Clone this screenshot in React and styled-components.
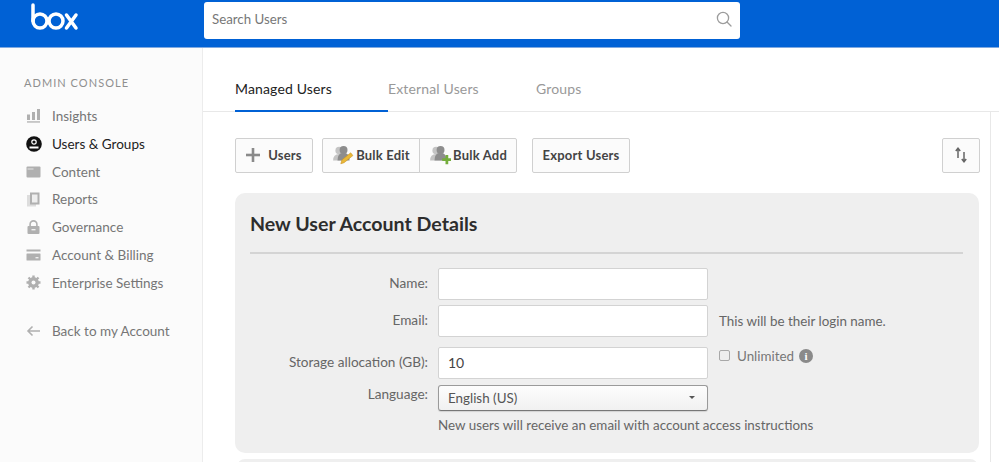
import React from "react";
import styled, {createGlobalStyle} from "styled-components";

const GlobalStyle = createGlobalStyle`
html, body {
  margin: 0;
  padding: 0;
  background: #fff;
  overflow: hidden;
}
* {
  box-sizing: border-box;
}
body {
  font-family: Lato, "Liberation Sans", sans-serif;
}
`;

const Page = styled.div`
width: 999px;
height: 462px;
overflow: hidden;
display: flex;
flex-direction: column;
`;

const TopBar = styled.header`
flex: 0 0 48px;
display: flex;
align-items: flex-start;
background: #0061d5;
border-bottom: 1px solid #7fa9e0;
`;

const LogoBox = styled.div`
width: 204px;
padding: 3px 0 0 30px;
`;

const SearchBox = styled.div`
width: 536px;
height: 37px;
margin-top: 2px;
padding: 0 8px 3px 8px;
display: flex;
align-items: center;
justify-content: space-between;
background: #fff;
border-radius: 3px;
font-size: 13.3px;
color: #777;
`;

const Body = styled.div`
flex: 1;
display: flex;
min-height: 0;
`;

const Sidebar = styled.nav`
flex: 0 0 203px;
padding: 28px 0 0 24px;
background: #fbfbfb;
border-right: 1px solid #ececec;
`;

const SideTitle = styled.div`
font-size: 11px;
line-height: 14px;
letter-spacing: 1.05px;
color: #8f8f8f;
margin-bottom: 12px;
`;

const SideItem = styled.div`
display: flex;
align-items: center;
height: 27.85px;
font-size: 13.5px;
color: ${props => props.active ? "#222" : "#767676"};
margin-top: ${props => props.gap || 0}px;
`;

const SideIcon = styled.span`
flex: 0 0 28px;
padding-left: 2px;
display: flex;
align-items: center;
svg {
  display: block;
}
`;

const Main = styled.main`
flex: 1;
min-width: 0;
`;

const Tabs = styled.div`
height: 64px;
padding-left: 32px;
display: flex;
align-items: flex-end;
border-bottom: 1px solid #e8e8e8;
`;

const Tab = styled.div`
width: ${props => props.w}px;
height: 33px;
margin-bottom: -1px;
font-size: 14px;
line-height: 20px;
letter-spacing: 0.15px;
color: ${props => props.active ? "#222" : "#999"};
border-bottom: 2px solid ${props => props.active ? "#0061d5" : "transparent"};
`;

const Content = styled.div`
width: 788px;
padding: 26px 10px 0 32px;
border-right: 1px solid #e8e8e8;
height: 350px;
`;

const Toolbar = styled.div`
display: flex;
align-items: stretch;
height: 35px;
`;

const Button = styled.div`
display: flex;
align-items: center;
justify-content: center;
gap: ${props => props.gap ?? 2}px;
width: ${props => props.w}px;
margin-left: ${props => props.ml || 0}px;
padding-bottom: 2px;
background: #fbfbfb;
border: 1px solid #d0d0d0;
border-radius: ${props => props.radius || "2px"};
font-size: 13px;
font-weight: 700;
letter-spacing: 0.2px;
color: #444;
`;

const Panel = styled.section`
width: 744px;
height: 260px;
margin-top: 20px;
padding: 15px 15px 0;
background: #efefef;
border-radius: 10px;
`;

const NextPanel = styled.div`
width: 741px;
height: 20px;
margin: 6px 0 0 2px;
background: #efefef;
border-radius: 8px 8px 0 0;
`;

const PanelTitle = styled.h2`
margin: 0;
height: 46px;
font-size: 19.6px;
font-weight: 700;
line-height: 32px;
color: #2d2d2d;
border-bottom: 2px solid #d4d4d4;
width: 713px;
`;

const Form = styled.div`
display: grid;
grid-template-columns: 178px 270px 1fr;
column-gap: 10px;
margin-top: 14px;
font-size: 13.6px;
color: #666;
`;

const Label = styled.div`
height: ${props => props.h}px;
margin-bottom: ${props => props.mb}px;
padding-top: ${props => props.pt ?? 6}px;
line-height: 18px;
text-align: right;
`;

const Input = styled.div`
height: ${props => props.h}px;
margin-bottom: ${props => props.mb}px;
padding: 0 9px 2px;
display: flex;
align-items: center;
background: #fff;
border: 1px solid #d3d3d3;
border-radius: 2px;
color: #444;
font-size: 14px;
`;

const Select = styled.div`
height: 26px;
padding: 0 12px 1px 9px;
display: flex;
align-items: center;
justify-content: space-between;
background: linear-gradient(#fdfdfd, #f1f1f1);
border: 1px solid #9a9a9a;
border-bottom-color: #777;
border-radius: 3px;
box-shadow: 0 1px 1px rgba(0, 0, 0, 0.12);
color: #555;
font-size: 13.4px;
&::after {
  content: "";
  width: 0;
  height: 0;
  border-left: 3px solid transparent;
  border-right: 3px solid transparent;
  border-top: 3px solid #555;
}
`;

const Hint = styled.div`
padding-top: ${props => props.pt || 0}px;
padding-left: ${props => props.pl || 0}px;
font-size: 13.4px;
line-height: 18px;
color: #666;
white-space: nowrap;
`;

const UnlimitedRow = styled.div`
display: flex;
align-items: center;
height: 18px;
padding-left: 1px;
font-size: 13.4px;
color: #777;
`;

const Check = styled.span`
width: 11px;
height: 11px;
margin: 0 7px 1px 0;
background: #ededed;
border: 1px solid #a8a8a8;
border-radius: 2px;
`;

const InfoDot = styled.span`
width: 14px;
height: 14px;
margin-left: 5px;
border-radius: 50%;
background: #8a8a8a;
color: #fff;
font: 700 11px/14px "Liberation Serif", serif;
text-align: center;
`;

const Logo = () => (
  <svg width="50" height="28" viewBox="0 0 50 28" fill="none" stroke="#fff" strokeWidth="3.5" strokeLinecap="round">
    <path d="M3 2V18"/>
    <circle cx="10" cy="18" r="7"/>
    <circle cx="26" cy="18" r="7"/>
    <path d="M36.500 12L46 25M46 12L36.500 25"/>
  </svg>
);

const SearchIcon = () => (
  <svg width="16" height="16" viewBox="0 0 16 16" fill="none" stroke="#9c9c9c" strokeWidth="1.3">
    <circle cx="7" cy="7" r="5.6"/>
    <path d="M11 11L15 15" strokeLinecap="round"/>
  </svg>
);

const c = "#b0b0b0";
const ICONS = {
  insights: <svg width="15" height="15" viewBox="0 0 15 15" fill={c}><rect x="1" y="6.500" width="3" height="5.500"/><rect x="6" y="4" width="3" height="8"/><rect x="11" y="1" width="3" height="11"/><rect x="1" y="13.300" width="13" height="1.300"/></svg>,
  users: <svg width="16" height="16" viewBox="0 0 16 16"><circle cx="8" cy="8" r="7.800" fill="#111"/><circle cx="8" cy="6" r="2.200" fill="none" stroke="#fff" strokeWidth="1.200"/><path d="M3.500 11.500h9" stroke="#fff" strokeWidth="2"/></svg>,
  content: <svg width="15" height="12" viewBox="0 0 15 12" fill={c}><path d="M0.500 1.500q0-1 1-1h12q1 0 1 1v9q0 1-1 1h-12q-1 0-1-1z"/><rect x="1.500" y="2.500" width="6" height="1" fill="#e4e4e4"/></svg>,
  reports: <svg width="15" height="15" viewBox="0 0 15 15"><rect x="1" y="3" width="9" height="11.500" fill="#ddd"/><rect x="4" y="0.500" width="9.500" height="12" fill={c}/><rect x="6" y="2.500" width="5.500" height="8" fill="#eee"/></svg>,
  lock: <svg width="15" height="14" viewBox="0 0 15 14" fill={c}><rect x="1.500" y="6" width="12" height="8" rx="1"/><path d="M4.100 6.500V4.300a3.400 3.400 0 0 1 6.800 0v2.200" fill="none" stroke={c} strokeWidth="1.600"/><rect x="5.500" y="9" width="4" height="1.400" fill="#eee"/></svg>,
  card: <svg width="15" height="12" viewBox="0 0 15 12" fill={c}><rect x="0.500" y="0.500" width="14" height="2"/><rect x="0.500" y="4.500" width="14" height="7" rx="0.500"/><rect x="9.500" y="8" width="3" height="1.400" fill="#eee"/></svg>,
  gear: <svg width="15" height="15" viewBox="0 0 15 15"><circle cx="7.500" cy="7.500" r="3.900" fill="none" stroke={c} strokeWidth="3"/><path d="M7.500 0.500v14M0.500 7.500h14M2.500 2.500l10 10M12.500 2.500l-10 10" stroke={c} strokeWidth="2.400"/><circle cx="7.500" cy="7.500" r="2" fill="#fbfbfb"/></svg>,
  back: <svg width="14" height="12" viewBox="0 0 14 12" fill="none" stroke={c} strokeWidth="1.600"><path d="M14 6H2M6.500 1.500L2 6l4.500 4.500"/></svg>,
};

const PeopleIcon = ({badge}) => (
  <svg width="22" height="20" viewBox="0 0 20 18">
    <circle cx="6.500" cy="5" r="3.400" fill="#c4c4c4"/>
    <path d="M1 14q0-6 5.500-6t5.500 6z" fill="#c4c4c4"/>
    <circle cx="10.500" cy="4.500" r="3.600" fill="#8d8d8d"/>
    <path d="M5 14q0-7 5.500-7t5.500 7z" fill="#8d8d8d"/>
    {badge === "edit" ?
      <path d="M8 17l1-3.500 8-6.500 2 2.500-8 6.500z" fill="#e8b838" stroke="#c98d1d" strokeWidth="0.500"/> :
      <path d="M12 12h3V9h2.500v3h2.500v2.500h-2.500v3H15v-3h-3z" fill="#74ad3c"/>}
  </svg>
);

const PlusIcon = () => (
  <svg width="14" height="14" viewBox="0 0 14 14" fill="#8a8a8a"><rect x="5.700" y="0" width="2.600" height="14"/><rect x="0" y="5.700" width="14" height="2.600"/></svg>
);

const SortIcon = () => (
  <svg width="14" height="16" viewBox="0 0 14 16" fill="none" stroke="#666" strokeWidth="1.500"><path d="M4 11V2M1.800 4L4 1.200 6.200 4" /><path d="M10 5v9.500M7.800 12L10 14.800 12.200 12"/></svg>
);

const NAV = [
  {icon: "insights", label: "Insights"},
  {icon: "users", label: "Users & Groups", active: true},
  {icon: "content", label: "Content"},
  {icon: "reports", label: "Reports"},
  {icon: "lock", label: "Governance"},
  {icon: "card", label: "Account & Billing"},
  {icon: "gear", label: "Enterprise Settings"},
  {icon: "back", label: "Back to my Account", gap: 20},
];

export default function App() {
  return (
    <Page>
      <GlobalStyle/>
      <TopBar>
        <LogoBox><Logo/></LogoBox>
        <SearchBox>
          Search Users
          <SearchIcon/>
        </SearchBox>
      </TopBar>
      <Body>
        <Sidebar>
          <SideTitle>ADMIN CONSOLE</SideTitle>
          {NAV.map(item => (
            <SideItem key={item.label} active={item.active} gap={item.gap}>
              <SideIcon>{ICONS[item.icon]}</SideIcon>
              {item.label}
            </SideItem>
          ))}
        </Sidebar>
        <Main>
          <Tabs>
            <Tab active w={153}>Managed Users</Tab>
            <Tab w={148}>External Users</Tab>
            <Tab w={80}>Groups</Tab>
          </Tabs>
          <Content>
            <Toolbar>
              <Button w={78} gap={8}><PlusIcon/>Users</Button>
              <Button w={98} ml={9} radius="2px 0 0 2px"><PeopleIcon badge="edit"/>Bulk Edit</Button>
              <Button w={98} ml={-1} radius="0 2px 2px 0"><PeopleIcon badge="add"/>Bulk Add</Button>
              <Button w={98} ml={15}>Export Users</Button>
              <Button w={38} ml={312}><SortIcon/></Button>
            </Toolbar>
            <Panel>
              <PanelTitle>New User Account Details</PanelTitle>
              <Form>
                <Label h={32} mb={5}>Name:</Label>
                <Input h={32} mb={5}/>
                <div/>
                <Label h={32} mb={10}>Email:</Label>
                <Input h={32} mb={10}/>
                <Hint pt={7} pl={1}>This will be their login name.</Hint>
                <Label h={32} mb={6}>Storage allocation (GB):</Label>
                <Input h={32} mb={6}>10</Input>
                <UnlimitedRow><Check/>Unlimited<InfoDot>i</InfoDot></UnlimitedRow>
                <Label h={26} mb={5} pt={0}>Language:</Label>
                <Select>English (US)</Select>
                <div/>
                <div/>
                <Hint>New users will receive an email with account access instructions</Hint>
              </Form>
            </Panel>
            <NextPanel/>
          </Content>
        </Main>
      </Body>
    </Page>
  );
}
